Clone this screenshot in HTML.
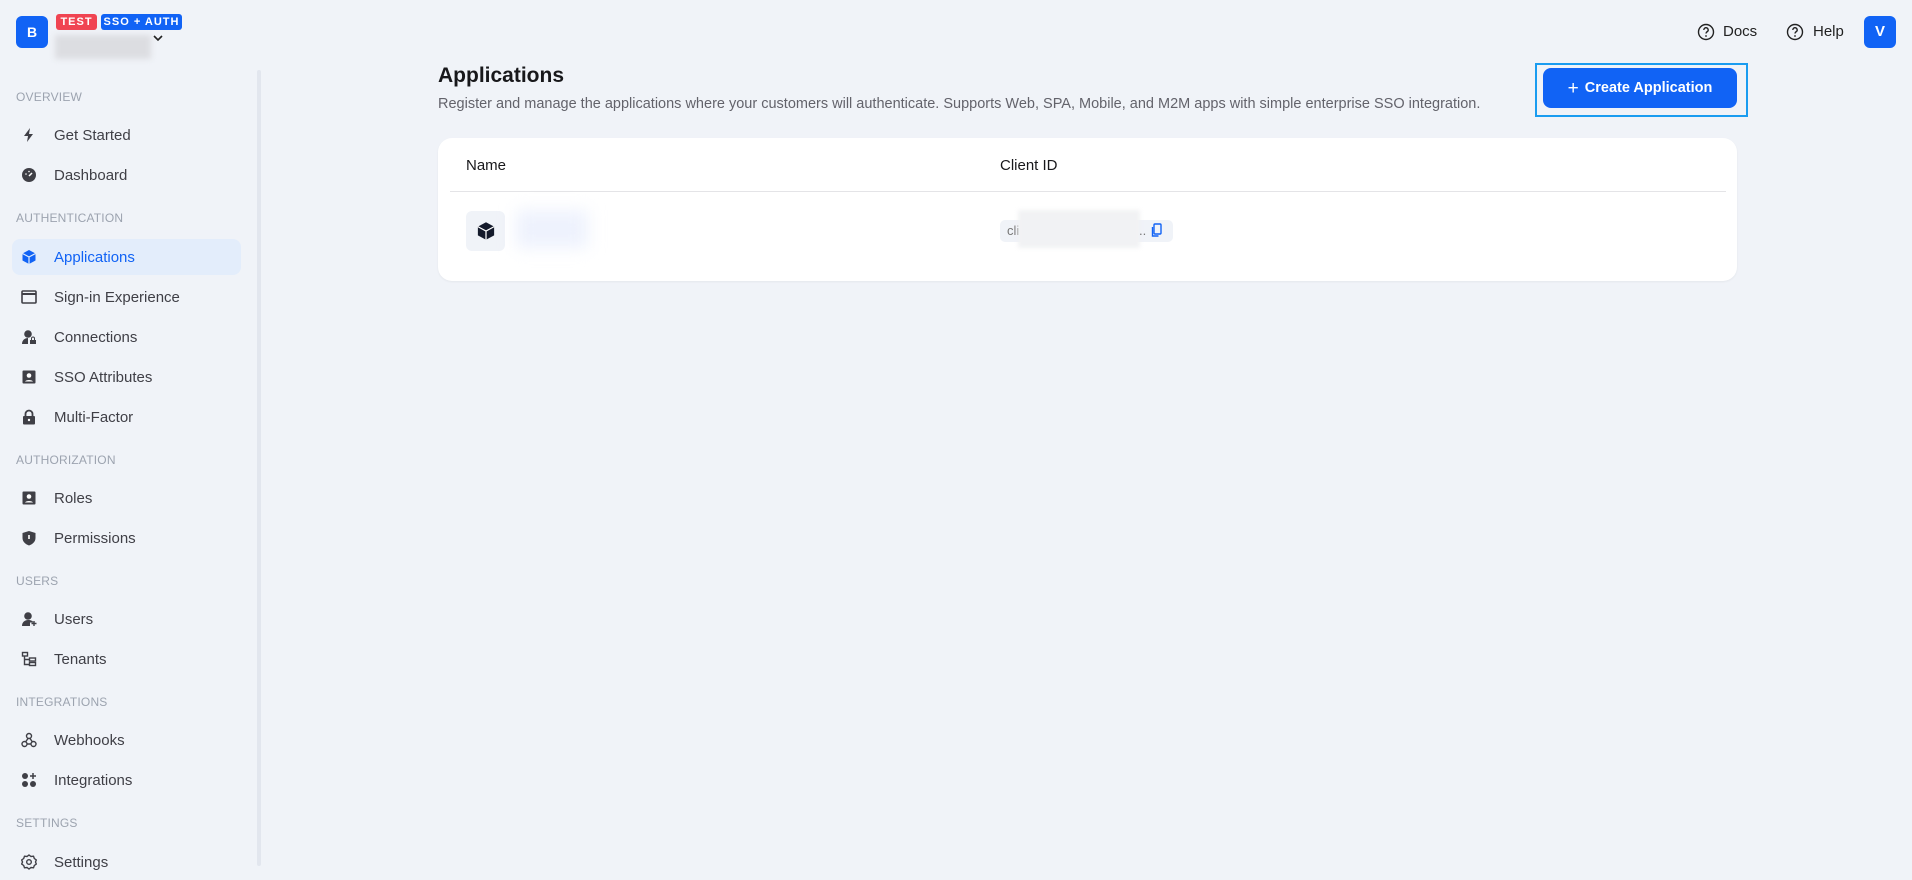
<!DOCTYPE html>
<html><head><meta charset="utf-8"><style>
*{margin:0;padding:0;box-sizing:border-box}
body{width:1912px;height:876px;background:#f0f3f8;font-family:"Liberation Sans",sans-serif;position:relative;overflow:hidden;color:#27272a}
.a{position:absolute}
.sec{position:absolute;left:16px;font-size:12px;color:#9ca3af;letter-spacing:.2px;line-height:14px}
.nav{position:absolute;left:12px;width:229px;height:36px;display:flex;align-items:center;font-size:15px;color:#3f3f46}
.nav svg{position:absolute;left:9px;width:16px;height:16px}
.nav span{position:absolute;left:42px}
.act{background:#e3edfb;border-radius:8px;color:#1163f5}
.bdg{position:absolute;top:14px;height:16px;border-radius:3px;color:#fff;font-size:11px;font-weight:bold;letter-spacing:1px;line-height:16px;text-align:center}
</style></head><body>
<div class="a" style="left:16px;top:16px;width:32px;height:32px;background:#1163f5;border-radius:6px;color:#fff;font-weight:bold;font-size:14px;text-align:center;line-height:32px">B</div>
<div class="bdg" style="left:56px;width:41px;background:#f04452">TEST</div>
<div class="bdg" style="left:101px;width:81px;background:#1163f5">SSO + AUTH</div>
<div class="a" style="left:55px;top:35px;width:96px;height:24px;background:#dcdde1;filter:blur(3px)"></div>
<svg class="a" style="left:152px;top:33px" width="12" height="10" viewBox="0 0 12 10"><path d="M2 3l4 4 4-4" stroke="#222" stroke-width="1.6" fill="none"/></svg>
<div class="a" style="left:257px;top:70px;width:4px;height:796px;background:#e2e6ee;border-radius:2px"></div>

<div class="sec" style="top:90px">OVERVIEW</div>
<div class="nav" style="top:117px"><svg viewBox="0 0 16 16"><path d="M9 1L3 9h4l-1 6 6-8H8z" fill="#3f3f46"/></svg><span>Get Started</span></div>
<div class="nav" style="top:157px"><svg viewBox="0 0 16 16"><circle cx="8" cy="8" r="7" fill="#3f3f46"/><path d="M8 9l3-3" stroke="#fff" stroke-width="1.5"/><circle cx="5" cy="7" r=".8" fill="#fff"/><circle cx="8" cy="4.5" r=".8" fill="#fff"/></svg><span>Dashboard</span></div>
<div class="sec" style="top:211px">AUTHENTICATION</div>
<div class="nav act" style="top:239px"><svg viewBox="0 0 16 16"><path d="M8 1l6.5 3.5v7L8 15l-6.5-3.5v-7z" fill="#1163f5"/><path d="M1.5 4.5L8 8l6.5-3.5M8 8v7" stroke="#e3edfb" stroke-width="1.2" fill="none"/></svg><span>Applications</span></div>
<div class="nav" style="top:279px"><svg viewBox="0 0 16 16"><rect x="1" y="2" width="14" height="12" rx="1" fill="none" stroke="#3f3f46" stroke-width="1.6"/><path d="M1 5h14" stroke="#3f3f46" stroke-width="2"/></svg><span>Sign-in Experience</span></div>
<div class="nav" style="top:319px"><svg viewBox="0 0 16 16"><circle cx="7" cy="5" r="3.8" fill="#3f3f46"/><path d="M1 15c0-4 3-6 6-6v6z" fill="#3f3f46"/><rect x="9" y="11" width="6" height="4" fill="#3f3f46"/><path d="M10.5 11V9.5a1.5 1.5 0 013 0V11" stroke="#3f3f46" fill="none"/></svg><span>Connections</span></div>
<div class="nav" style="top:359px"><svg viewBox="0 0 16 16"><rect x="1.5" y="1.5" width="13" height="13" rx="1" fill="#3f3f46"/><circle cx="8" cy="6.5" r="2.3" fill="#fff"/><path d="M4 12.5c1-2 7-2 8 0" fill="#fff"/></svg><span>SSO Attributes</span></div>
<div class="nav" style="top:399px"><svg viewBox="0 0 16 16"><rect x="2" y="7" width="12" height="8.5" rx="1" fill="#3f3f46"/><path d="M4.5 7V5a3.5 3.5 0 017 0v2" stroke="#3f3f46" stroke-width="1.8" fill="none"/><circle cx="8" cy="11" r="1.2" fill="#fff"/></svg><span>Multi-Factor</span></div>
<div class="sec" style="top:453px">AUTHORIZATION</div>
<div class="nav" style="top:480px"><svg viewBox="0 0 16 16"><rect x="1.5" y="1.5" width="13" height="13" rx="1" fill="#3f3f46"/><circle cx="8" cy="6.5" r="2.3" fill="#fff"/><path d="M4 12.5c1-2 7-2 8 0" fill="#fff"/></svg><span>Roles</span></div>
<div class="nav" style="top:520px"><svg viewBox="0 0 16 16"><path d="M8 1l6.5 2v5c0 4-3.5 6.5-6.5 7.5C5 14.5 1.5 12 1.5 8V3z" fill="#3f3f46"/><rect x="7.2" y="5" width="1.6" height="4" fill="#fff"/></svg><span>Permissions</span></div>
<div class="sec" style="top:574px">USERS</div>
<div class="nav" style="top:601px"><svg viewBox="0 0 16 16"><circle cx="7" cy="5" r="3.8" fill="#3f3f46"/><path d="M1 15c0-4 3-6 6-6s5 1 5.5 2.5H9V15z" fill="#3f3f46"/><path d="M13 10v5M10.5 12.5h5" stroke="#3f3f46" stroke-width="1.4"/></svg><span>Users</span></div>
<div class="nav" style="top:641px"><svg viewBox="0 0 16 16" fill="none" stroke="#3f3f46" stroke-width="1.4"><rect x="1.5" y="1.5" width="5" height="3.5"/><rect x="8.5" y="7" width="6" height="3"/><rect x="8.5" y="11.5" width="6" height="3"/><path d="M3.5 5v8.5h5M3.5 8.5h5"/></svg><span>Tenants</span></div>
<div class="sec" style="top:695px">INTEGRATIONS</div>
<div class="nav" style="top:722px"><svg viewBox="0 0 16 16" fill="none" stroke="#3f3f46" stroke-width="1.4"><circle cx="8" cy="4" r="2.5"/><circle cx="3.5" cy="12" r="2.5"/><circle cx="12.5" cy="12" r="2.5"/><path d="M7 6.5L4.5 10M6 12h4M9 6.5l2.5 3.5"/></svg><span>Webhooks</span></div>
<div class="nav" style="top:762px"><svg viewBox="0 0 16 16" fill="#3f3f46"><circle cx="4" cy="4" r="3"/><circle cx="4" cy="12" r="3"/><circle cx="12" cy="12" r="3"/><path d="M12 1v6M9 4h6" stroke="#3f3f46" stroke-width="1.5"/></svg><span>Integrations</span></div>
<div class="sec" style="top:816px">SETTINGS</div>
<div class="nav" style="top:844px"><svg viewBox="0 0 16 16" fill="none" stroke="#3f3f46" stroke-width="1.4"><path d="M8 1l2 1.5 2.5-.3.8 2.3 2 1.5-.8 2 .8 2-2 1.5-.8 2.3-2.5-.3L8 15l-2-1.5-2.5.3-.8-2.3-2-1.5.8-2-.8-2 2-1.5.8-2.3 2.5.3z"/><circle cx="8" cy="8" r="2.3"/></svg><span>Settings</span></div>

<svg class="a" style="left:1697px;top:23px" width="18" height="18" viewBox="0 0 18 18"><circle cx="9" cy="9" r="7.5" fill="none" stroke="#222" stroke-width="1.4"/><path d="M6.8 7a2.2 2.2 0 114 1.2c-.8.6-1.8 1-1.8 2.3" fill="none" stroke="#222" stroke-width="1.4"/><circle cx="9" cy="13" r=".9" fill="#222"/></svg>
<div class="a" style="left:1723px;top:22px;font-size:15px;color:#222;line-height:20px">Docs</div>
<svg class="a" style="left:1786px;top:23px" width="18" height="18" viewBox="0 0 18 18"><circle cx="9" cy="9" r="7.5" fill="none" stroke="#222" stroke-width="1.4"/><path d="M6.8 7a2.2 2.2 0 114 1.2c-.8.6-1.8 1-1.8 2.3" fill="none" stroke="#222" stroke-width="1.4"/><circle cx="9" cy="13" r=".9" fill="#222"/></svg>
<div class="a" style="left:1813px;top:22px;font-size:15px;color:#222;line-height:20px">Help</div>
<div class="a" style="left:1864px;top:16px;width:32px;height:32px;background:#1163f5;border-radius:6px;color:#fff;font-weight:bold;font-size:15px;text-align:center;line-height:32px">V</div>

<div class="a" style="left:438px;top:63px;font-size:21px;font-weight:bold;color:#18181b;line-height:26px">Applications</div>
<div class="a" style="left:438px;top:94px;font-size:14.5px;color:#63636b;line-height:20px">Register and manage the applications where your customers will authenticate. Supports Web, SPA, Mobile, and M2M apps with simple enterprise SSO integration.</div>
<div class="a" style="left:1535px;top:63px;width:213px;height:54px;border:2px solid #1a9cf0"></div>
<div class="a" style="left:1543px;top:68px;width:194px;height:40px;background:#1163f5;border-radius:8px;color:#fff;font-size:14.5px;font-weight:bold;line-height:40px;text-align:center"><span style="font-weight:normal;font-size:19px;vertical-align:-2px;margin-right:6px">+</span>Create Application</div>

<div class="a" style="left:438px;top:138px;width:1299px;height:143px;background:#fff;border-radius:14px;box-shadow:0 1px 2px rgba(0,0,0,.05)"></div>
<div class="a" style="left:466px;top:156px;font-size:15px;color:#18181b;line-height:20px">Name</div>
<div class="a" style="left:1000px;top:156px;font-size:15px;color:#18181b;line-height:20px">Client ID</div>
<div class="a" style="left:450px;top:191px;width:1276px;height:1px;background:#e4e4e7"></div>
<div class="a" style="left:466px;top:211px;width:39px;height:40px;background:#f0f3f8;border-radius:6px"></div>
<svg class="a" style="left:476px;top:221px" width="20" height="20" viewBox="0 0 16 16"><path d="M8 1l6.5 3.5v7L8 15l-6.5-3.5v-7z" fill="#141a2b"/><path d="M1.5 4.5L8 8l6.5-3.5M8 8v7" stroke="#fff" stroke-width="1" fill="none"/></svg>
<div class="a" style="left:516px;top:210px;width:72px;height:38px;background:#eef2fd;filter:blur(8px)"></div>
<div class="a" style="left:1000px;top:220px;width:173px;height:22px;background:#f0f3f8;border-radius:5px;font-size:13px;color:#777;line-height:22px;padding-left:7px">cli</div>
<div class="a" style="left:1018px;top:210px;width:122px;height:38px;background:#f1f2f4;filter:blur(2px)"></div>
<div class="a" style="left:1139px;top:220px;font-size:13px;color:#777;line-height:22px">..</div>
<svg class="a" style="left:1151px;top:223px" width="12" height="15" viewBox="0 0 12 15"><rect x="3" y="1" width="7" height="10" rx="1" fill="none" stroke="#1163f5" stroke-width="1.4"/><path d="M1.5 4v9h6" fill="none" stroke="#1163f5" stroke-width="1.4"/></svg>
</body></html>
